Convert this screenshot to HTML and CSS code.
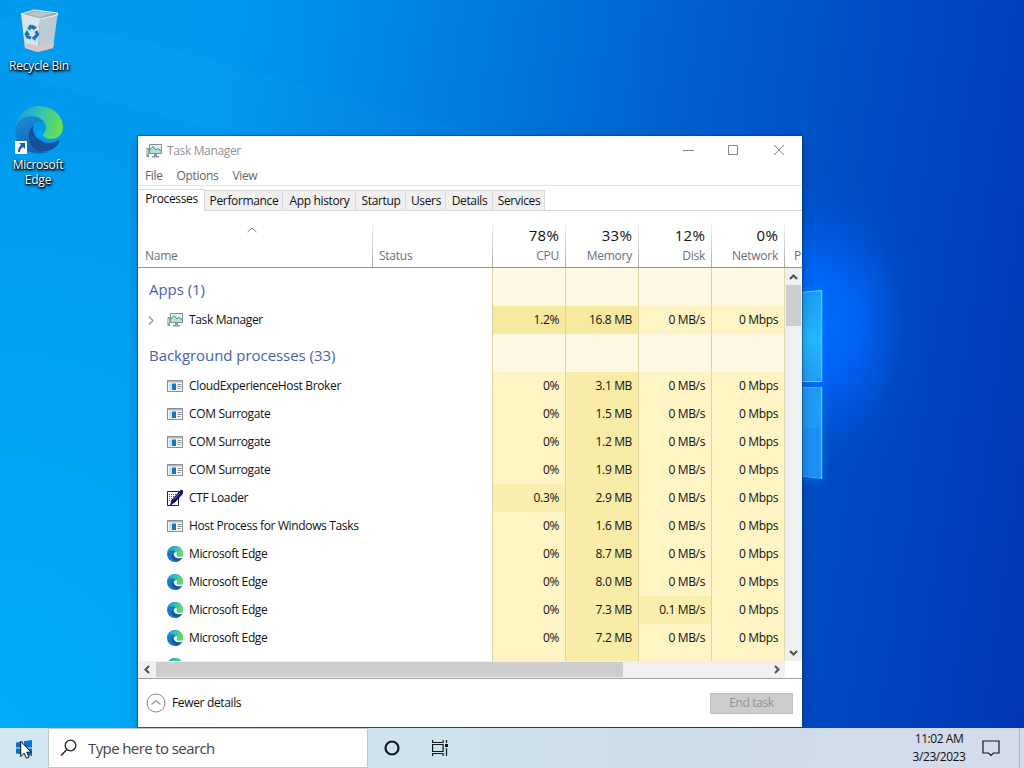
FILE: index.html
```html
<!DOCTYPE html>
<html lang="en">
<head>
    <meta charset="UTF-8">
    <meta name="viewport" content="width=device-width, initial-scale=1.0">
    <title>Task Manager</title>
    <link rel="stylesheet" href="styles.css">
</head>
<body>
    <!-- Shared icons -->
    <svg class="icon-defs" width="0" height="0">
        <defs>
            <linearGradient id="edgeTop" x1="0" y1="0.3" x2="1" y2="0.5">
                <stop offset="0" stop-color="#1b9de2"/>
                <stop offset="0.5" stop-color="#35c3b4"/>
                <stop offset="1" stop-color="#6be04a"/>
            </linearGradient>
            <linearGradient id="edgeLeft" x1="0" y1="0" x2="0.4" y2="1">
                <stop offset="0" stop-color="#1c8fd8"/>
                <stop offset="1" stop-color="#1262b4"/>
            </linearGradient>
        </defs>
        <symbol id="icon-edge" viewBox="0 0 48 48">
            <path fill="url(#edgeLeft)" d="M0.500 24C1 15 8 10 17 10C25 10 30 14 31 18C25 13 17 17 16 26C15 36 22 46 33 46C14 52 0 40 0.500 24Z"/>
            <path fill="#154f9c" d="M19 19C12 24 12 36 19 42C27 49 39 45 44 37C45 35 44 34 42 35C35 39 26 36 21 31C18 27 17 22 19 19Z"/>
            <path fill="url(#edgeTop)" d="M0.500 22C2 9 12 0 24 0C38 0 48 10 48 21C48 29 42 33 36 33C31 33 28 31 28 29C28 27 31 26 31 22C31 15 24 10 16 10C8 10 2 15 0.500 22Z"/>
        </symbol>
        <symbol id="icon-edge-small" viewBox="0 0 16 16">
            <circle cx="8" cy="8" r="8" fill="#1678c8"/>
            <path fill="#1557a6" d="M5 7C3.500 11 6 15 10 15.700C12.500 15.200 14.500 13.500 15.300 11.500L8 10Z"/>
            <path fill="url(#edgeTop)" d="M0.200 7C1 3 4 0 8 0C12.500 0 16 3.500 16 7.200C16 10 14 11.300 12 11.300L9 9C10 6.500 8 4.200 5.200 4.200C2.800 4.200 1 5.200 0.200 7Z"/>
            <path fill="#fff" d="M9.800 6.500C7.500 5.500 6 8 7.200 10C8.700 12.300 12 13 15.300 11.400L16 9.500C14 11.200 10.500 11 9.700 9.500C9.300 8.500 10.500 8 9.800 6.500Z"/>
        </symbol>
        <symbol id="icon-taskmgr" viewBox="0 0 16 16">
            <path fill="#8b9697" d="M0.500 5h2.500v9h-2.500z"/>
            <path fill="#dce6e6" d="M1.200 6.500h1v5h-1z"/>
            <path fill="#dff5f4" stroke="#829091" d="M3.500 1.500h12v9h-12z"/>
            <path fill="#b4e1e0" d="M4 6.500l3-3 3 3.500 2-2 3 3v2h-11z"/>
            <path fill="none" stroke="#3b9293" d="M4 7l2-2.500 1.500-0.500 2.500 3 1.500-1.500 3.500 2"/>
            <path fill="#8a9798" d="M8 11h3v2h2v1.500h-7v-1.500h2z"/>
        </symbol>
        <symbol id="icon-exe" viewBox="0 0 16 16">
            <path fill="#f5f7f8" stroke="#858d94" d="M0.500 2.500h15v11h-15z"/>
            <path fill="#b5bcc1" d="M1 3h14v1.500h-14z"/>
            <path fill="#cfe4f2" d="M2 5.500h3v7h-3z"/>
            <path fill="#1874bd" d="M5 5.500h4v6.500h-4z"/>
            <path stroke="#8a929a" d="M10.500 6.500h4M10.500 8.500h4M10.500 10.500h3"/>
        </symbol>
        <symbol id="icon-ctf" viewBox="0 0 16 16">
            <path fill="#fff" stroke="#222" d="M0.500 1.500h11v14h-11z"/>
            <path stroke="#555" stroke-dasharray="1 1" d="M2 4.500h8M2 6.500h7M2 8.500h5M2 10.500h3"/>
            <path fill="#10107c" stroke="#080848" stroke-width="0.800" d="M13.500 0.500h2.200v3L8.500 11.500l-5 3.500 1.500-5z"/>
            <path stroke="#5a68d8" d="M7 9.500l6-6.500"/>
        </symbol>
    </svg>

    <div class="desktop">
        <svg class="wallpaper" width="1024" height="728" viewBox="0 0 1024 728">
            <defs>
                <linearGradient id="pane" x1="0" y1="0" x2="0" y2="1">
                    <stop offset="0" stop-color="#1c9df5"/>
                    <stop offset="0.550" stop-color="#20b8ff"/>
                    <stop offset="1" stop-color="#1f9cf5"/>
                </linearGradient>
                <filter id="soft"><feGaussianBlur stdDeviation="4"/></filter>
            </defs>
            <path fill="#0c78ff" opacity="0.400" filter="url(#soft)" d="M790 288L824 286V484L790 478Z"/>
            <path fill="#fff" opacity="0.015" d="M0 70L500 210V140L140 40L0 20Z"/>
            <path fill="url(#pane)" stroke="#3fdcf8" d="M780 294.500L821.500 290.500V381.500H780Z"/>
            <path fill="#1f9bf5" stroke="#27b3f8" d="M780 387.500H821.500V478.500L780 473.500Z"/>
            <path fill="#1b8ff5" d="M780 430L821 428V478L780 473Z"/>
            <path stroke="#38cdf9" stroke-width="1.500" d="M821.500 290V382M821.500 387V479"/>
        </svg>

        <div class="shortcuts">
            <div class="shortcut bin">
                <svg width="46" height="48" viewBox="0 0 46 48">
                    <path fill="#dbe4e9" d="M5 8L24 13L22 46L9 42Z"/>
                    <path fill="#bccbd6" d="M24 13L41.500 9L37 42L22 46Z"/>
                    <path fill="#d6c8c6" d="M8.500 37L22.500 40L38 37L37 42L22 46L9 42Z"/>
                    <path fill="#9badb8" stroke="#edf3f5" d="M5 8L18 4L41.500 7V9L24 13Z"/>
                    <path fill="#b9c6ce" d="M11 8L19 5.500L36 7.500L24 11Z"/>
                    <path fill="none" stroke="#1474c6" stroke-width="3.200" d="M12.500 23.500L14.500 20.500L17.500 21.500M20 25L21.500 28.500L19 31.500M15 32L11.500 31L10.500 28"/>
                    <path fill="#1474c6" d="M16.500 18.500L21 21.500L17 24.500ZM20 28.500L15.500 32L19.500 35ZM8 28.500L11 24L14 29Z"/>
                </svg>
                <span>Recycle Bin</span>
            </div>
            <div class="shortcut edge">
                <svg width="48" height="48" viewBox="0 0 48 48">
                    <use href="#icon-edge" width="48" height="48"/>
                    <path fill="#f6f8fb" d="M0 35h12v13h-12z"/>
                    <path fill="#245a9d" d="M4 37h6v6l-2-2c-2 1-3 3-3 5h-2c0-3 1-5 3-7z"/>
                </svg>
                <span>Microsoft<br>Edge</span>
            </div>
        </div>

        <div class="window">
            <div class="title-bar">
                <svg class="title-icon" width="16" height="16"><use href="#icon-taskmgr"/></svg>
                <span class="title">Task Manager</span>
                <svg class="window-controls" width="104" height="12" viewBox="0 0 104 12">
                    <path fill="none" stroke="#888" d="M0 6.500h11M45.500 1.500h9v9h-9zM91 1l10 10M101 1L91 11"/>
                </svg>
            </div>
            <div class="menu-bar">
                <span>File</span>
                <span>Options</span>
                <span>View</span>
            </div>

            <div class="tabs">
                <div class="tab active tab-processes">Processes</div>
                <div class="tab tab-performance">Performance</div>
                <div class="tab tab-history">App history</div>
                <div class="tab tab-startup">Startup</div>
                <div class="tab tab-users">Users</div>
                <div class="tab tab-details">Details</div>
                <div class="tab tab-services">Services</div>
            </div>

            <div class="table-header">
                <div class="col name">
                    <svg class="sort-arrow" width="10" height="6" viewBox="0 0 10 6"><path fill="none" stroke="#777" d="M0.500 5L5 1l4.500 4"/></svg>
                    <span class="label">Name</span>
                </div>
                <div class="col status"><span class="label">Status</span></div>
                <div class="col"><span class="total">78%</span><span class="label">CPU</span></div>
                <div class="col"><span class="total">33%</span><span class="label">Memory</span></div>
                <div class="col"><span class="total">12%</span><span class="label">Disk</span></div>
                <div class="col"><span class="total">0%</span><span class="label">Network</span></div>
                <div class="col last"><span class="label">P</span></div>
            </div>

            <div class="table-body">
                <div class="rows">
                    <div class="row group">
                        <div class="process"><span>Apps (1)</span></div>
                        <div class="cell"></div><div class="cell"></div><div class="cell"></div><div class="cell"></div>
                    </div>
                    <div class="row">
                        <div class="process">
                            <svg class="expand" width="6" height="9" viewBox="0 0 6 9"><path fill="none" stroke="#999" stroke-width="1.300" d="M1 0.500l4 4-4 4"/></svg>
                            <svg class="icon" width="16" height="16"><use href="#icon-taskmgr"/></svg>
                            <span>Task Manager</span>
                        </div>
                        <div class="cell high">1.2%</div><div class="cell high">16.8 MB</div><div class="cell">0 MB/s</div><div class="cell">0 Mbps</div>
                    </div>
                    <div class="row group">
                        <div class="process"><span>Background processes (33)</span></div>
                        <div class="cell"></div><div class="cell"></div><div class="cell"></div><div class="cell"></div>
                    </div>
                    <div class="row">
                        <div class="process"><svg class="icon" width="16" height="16"><use href="#icon-exe"/></svg><span>CloudExperienceHost Broker</span></div>
                        <div class="cell">0%</div><div class="cell mid">3.1 MB</div><div class="cell">0 MB/s</div><div class="cell">0 Mbps</div>
                    </div>
                    <div class="row">
                        <div class="process"><svg class="icon" width="16" height="16"><use href="#icon-exe"/></svg><span>COM Surrogate</span></div>
                        <div class="cell">0%</div><div class="cell mid">1.5 MB</div><div class="cell">0 MB/s</div><div class="cell">0 Mbps</div>
                    </div>
                    <div class="row">
                        <div class="process"><svg class="icon" width="16" height="16"><use href="#icon-exe"/></svg><span>COM Surrogate</span></div>
                        <div class="cell">0%</div><div class="cell mid">1.2 MB</div><div class="cell">0 MB/s</div><div class="cell">0 Mbps</div>
                    </div>
                    <div class="row">
                        <div class="process"><svg class="icon" width="16" height="16"><use href="#icon-exe"/></svg><span>COM Surrogate</span></div>
                        <div class="cell">0%</div><div class="cell mid">1.9 MB</div><div class="cell">0 MB/s</div><div class="cell">0 Mbps</div>
                    </div>
                    <div class="row">
                        <div class="process"><svg class="icon" width="16" height="16"><use href="#icon-ctf"/></svg><span>CTF Loader</span></div>
                        <div class="cell low">0.3%</div><div class="cell mid">2.9 MB</div><div class="cell">0 MB/s</div><div class="cell">0 Mbps</div>
                    </div>
                    <div class="row">
                        <div class="process"><svg class="icon" width="16" height="16"><use href="#icon-exe"/></svg><span>Host Process for Windows Tasks</span></div>
                        <div class="cell">0%</div><div class="cell mid">1.6 MB</div><div class="cell">0 MB/s</div><div class="cell">0 Mbps</div>
                    </div>
                    <div class="row">
                        <div class="process"><svg class="icon" width="16" height="16"><use href="#icon-edge-small"/></svg><span>Microsoft Edge</span></div>
                        <div class="cell">0%</div><div class="cell mid">8.7 MB</div><div class="cell">0 MB/s</div><div class="cell">0 Mbps</div>
                    </div>
                    <div class="row">
                        <div class="process"><svg class="icon" width="16" height="16"><use href="#icon-edge-small"/></svg><span>Microsoft Edge</span></div>
                        <div class="cell">0%</div><div class="cell mid">8.0 MB</div><div class="cell">0 MB/s</div><div class="cell">0 Mbps</div>
                    </div>
                    <div class="row">
                        <div class="process"><svg class="icon" width="16" height="16"><use href="#icon-edge-small"/></svg><span>Microsoft Edge</span></div>
                        <div class="cell">0%</div><div class="cell mid">7.3 MB</div><div class="cell low">0.1 MB/s</div><div class="cell">0 Mbps</div>
                    </div>
                    <div class="row">
                        <div class="process"><svg class="icon" width="16" height="16"><use href="#icon-edge-small"/></svg><span>Microsoft Edge</span></div>
                        <div class="cell">0%</div><div class="cell mid">7.2 MB</div><div class="cell">0 MB/s</div><div class="cell">0 Mbps</div>
                    </div>
                    <!-- Cut off by the bottom of the list -->
                    <div class="row">
                        <div class="process"><svg class="icon" width="16" height="16"><use href="#icon-edge-small"/></svg></div>
                        <div class="cell"></div><div class="cell mid"></div><div class="cell"></div><div class="cell"></div>
                    </div>
                </div>
                <div class="scroll-vertical">
                    <svg width="9" height="6" viewBox="0 0 9 6"><path fill="none" stroke="#505050" stroke-width="2" d="M1 5l3.500-3.500L8 5"/></svg>
                    <div class="thumb"></div>
                    <svg class="down" width="9" height="6" viewBox="0 0 9 6"><path fill="none" stroke="#505050" stroke-width="2" d="M1 1l3.500 3.500L8 1"/></svg>
                </div>
            </div>
            <div class="scroll-horizontal">
                <svg width="6" height="9" viewBox="0 0 6 9"><path fill="none" stroke="#505050" stroke-width="2" d="M5 1L1.500 4.500 5 8"/></svg>
                <div class="thumb"></div>
                <svg class="right" width="6" height="9" viewBox="0 0 6 9"><path fill="none" stroke="#505050" stroke-width="2" d="M1 1l3.500 3.500L1 8"/></svg>
            </div>

            <div class="window-footer">
                <svg width="20" height="20" viewBox="0 0 20 20">
                    <circle cx="10" cy="10" r="9" fill="none" stroke="#8a8a8a"/>
                    <path fill="none" stroke="#999" stroke-width="1.300" d="M5.500 11.500L10 7.500l4.500 4"/>
                </svg>
                <span class="fewer">Fewer details</span>
                <button class="end-task" disabled>End task</button>
            </div>
        </div>
    </div>

    <div class="taskbar">
        <div class="start">
            <svg width="16" height="16" viewBox="0 0 16 16"><path fill="#0873ca" d="M0 2.500L7 1.500V7.500H0ZM8 1.300L16 0V7.500H8ZM0 8.500H7V14.500L0 13.500ZM8 8.500H16V16L8 14.700Z"/></svg>
            <svg class="cursor" width="12" height="19" viewBox="0 0 12 19"><path fill="#fff" stroke="#111" d="M0.700 1.200V16.500L4.200 13.200L6.500 18.200L9 17L6.700 12.200H11.200Z"/></svg>
        </div>
        <div class="search">
            <svg width="18" height="18" viewBox="0 0 18 18"><path fill="none" stroke="#222" stroke-width="1.400" d="M6.700 10.800L1 16.500"/><circle cx="10.500" cy="6.500" r="5.300" fill="none" stroke="#222" stroke-width="1.300"/></svg>
            <span>Type here to search</span>
        </div>
        <svg class="cortana" width="16" height="16" viewBox="0 0 16 16"><circle cx="8" cy="8" r="6.500" fill="none" stroke="#101820" stroke-width="2.200"/></svg>
        <svg class="task-view" width="17" height="16" viewBox="0 0 17 16"><path fill="none" stroke="#101820" stroke-width="1.200" d="M0.600 0v2.500h10.500V0M0.600 4.500h10.500v7H0.600zM0.600 16v-2.500h10.500V16M14.500 0v3M14.500 8v8"/><path fill="#101820" d="M13 4h3v3h-3z"/></svg>
        <div class="clock"><span>11:02 AM</span><span>3/23/2023</span></div>
        <svg class="action-center" width="18" height="17" viewBox="0 0 18 17"><path fill="none" stroke="#101820" stroke-width="1.200" d="M1 1h16v12h-5.500L9 15.500 6.500 13H1z"/></svg>
        <div class="show-desktop"></div>
    </div>
</body>
</html>
```

FILE: styles.css
```css
* {
    box-sizing: border-box;
}

body {
    margin: 0;
    width: 1024px;
    height: 768px;
    overflow: hidden;
    font-family: "Open Sans", "Noto Sans", sans-serif;
    font-size: 12px;
    line-height: 16px;
    letter-spacing: -0.35px;
    color: #111;
}

svg {
    display: block;
    flex: none;
}

.icon-defs {
    position: absolute;
}

.desktop {
    position: relative;
    height: 728px;
    background:
        radial-gradient(ellipse 120px 160px at 815px 325px, #006cff 0%, rgba(0, 104, 255, 0.8) 35%, rgba(0, 90, 225, 0.15) 75%, rgba(0, 90, 225, 0) 100%),
        radial-gradient(ellipse 500px 600px at 0 100%, rgba(0, 185, 255, 0.6), rgba(0, 180, 255, 0)),
        linear-gradient(98deg, #009bef 0%, #009bf0 20%, #0086e4 36%, #0068d3 56%, #004fc6 76%, #0040bd 90%, #0036b4 100%);
}

.wallpaper {
    position: absolute;
    top: 0;
    left: 0;
}

/* Desktop icons */
.shortcuts {
    position: absolute;
    top: 6px;
    left: 1px;
    width: 76px;
}

.shortcut {
    display: flex;
    flex-direction: column;
    align-items: center;
    text-align: center;
    line-height: 15px;
    letter-spacing: -0.25px;
    color: #fff;
    text-shadow: 1px 1px 2px #000, 0 1px 2px #000, 1px 2px 3px rgba(0, 0, 0, 0.6);
}

.shortcut.bin {
    height: 100px;
}

.shortcut span {
    margin-top: 4px;
}

.shortcut.edge span {
    margin: 3px 2px 0 0;
}

/* Task Manager window */
.window {
    position: absolute;
    top: 136px;
    left: 138px;
    width: 664px;
    height: 591px;
    background: #fff;
    box-shadow: 0 0 0 1px rgba(0, 65, 115, 0.5), 0 3px 10px rgba(0, 0, 0, 0.3);
}

.title-bar {
    height: 30px;
    display: flex;
    align-items: center;
    padding: 0 15px 0 8px;
    color: #929292;
}

.title {
    margin-left: 5px;
}

.window-controls {
    margin: -2px 0 0 auto;
}

.menu-bar {
    height: 20px;
    display: flex;
    gap: 14px;
    padding: 2px 7px;
    color: #666;
    border-bottom: 1px solid #e3e3e3;
}

.tabs {
    height: 25px;
    display: flex;
    align-items: flex-end;
    padding-top: 3px;
    border-bottom: 1px solid #d9d9d9;
}

.tab {
    height: 20px;
    text-align: center;
    white-space: nowrap;
    background: #f0f0f0;
    border: 1px solid #d9d9d9;
    border-width: 1px 1px 0 0;
    padding: 2px 0 0 1px;
}

.tab.active {
    height: 22px;
    margin-bottom: -1px;
    padding-top: 1px;
    background: #fff;
}

.tab-processes {
    width: 67px;
}

.tab-performance {
    width: 78px;
}

.tab-history {
    width: 73px;
}

.tab-startup {
    width: 50px;
}

.tab-users {
    width: 40px;
}

.tab-details {
    width: 47px;
}

.tab-services {
    width: 52px;
}

.table-header {
    height: 57px;
    display: grid;
    grid-template-columns: 234px 120px 73px 73px 73px 73px 18px;
    border-bottom: 1px solid #929292;
}

.col {
    display: flex;
    flex-direction: column;
    align-items: flex-end;
    justify-content: flex-end;
    margin-top: 13px;
    padding: 0 6px 3px 0;
    border-left: 1px solid;
    border-image: linear-gradient(#f4f4f4, #aaa) 1;
}

.col.name {
    align-items: flex-start;
    justify-content: space-between;
    padding-left: 7px;
    border: none;
}

.col.status {
    align-items: flex-start;
    padding-left: 6px;
}

.col.last {
    align-items: flex-start;
    padding: 0 0 3px 9px;
    overflow: hidden;
}

.sort-arrow {
    margin: 3px 0 0 102px;
}

.label {
    color: #68707c;
    letter-spacing: -0.25px;
}

.total {
    font-size: 15px;
    line-height: 20px;
    letter-spacing: 0.2px;
    margin-bottom: 3px;
}

.table-body {
    height: 393px;
    display: flex;
    overflow: hidden;
}

.rows {
    width: 647px;
    border-right: 1px solid #e3dcae;
}

.row {
    height: 28px;
    display: grid;
    grid-template-columns: 354px 73px 73px 73px 73px;
    line-height: 28px;
}

.row.group {
    height: 38px;
    line-height: 43px;
}

.process {
    display: flex;
    align-items: center;
    padding-left: 29px;
    white-space: nowrap;
}

.group .process {
    padding-left: 11px;
    font-size: 15px;
    letter-spacing: -0.05px;
    color: #4563ae;
}

.icon {
    margin-right: 6px;
}

.expand {
    margin-left: -19px;
    margin-right: 13px;
}

.cell {
    padding-right: 6px;
    text-align: right;
    background: #fff4c4;
    border-left: 1px solid #ddd59f;
}

.cell.low {
    background: #fbefb0;
}

.cell.mid {
    background: #f9eca8;
}

.cell.high {
    background: #f8e9a0;
}

.group .cell {
    background: #fff9e4;
}

/* Scrollbars */
.scroll-vertical {
    width: 17px;
    display: flex;
    flex-direction: column;
    align-items: center;
    padding: 6px 1px 5px;
    background: #f0f0f0;
}

.scroll-vertical .thumb {
    width: 15px;
    height: 41px;
    margin-top: 5px;
    background: #cdcdcd;
}

.scroll-vertical .down {
    margin-top: auto;
}

.scroll-horizontal {
    width: 647px;
    height: 17px;
    display: flex;
    align-items: center;
    padding: 0 5px 0 6px;
    background: #f0f0f0;
}

.scroll-horizontal .thumb {
    width: 467px;
    height: 15px;
    margin-left: 6px;
    background: #cdcdcd;
}

.scroll-horizontal .right {
    margin-left: auto;
}

.window-footer {
    height: 49px;
    display: flex;
    align-items: center;
    padding: 0 9px 0 8px;
    border-top: 1px solid #a0a0a0;
}

.fewer {
    margin-left: 6px;
}

.end-task {
    width: 83px;
    height: 21px;
    margin-left: auto;
    padding: 0;
    border: 1px solid #bfbfbf;
    background: #ccc;
    color: #929292;
    font: inherit;
    letter-spacing: inherit;
}

/* Taskbar */
.taskbar {
    position: relative;
    height: 40px;
    display: flex;
    align-items: center;
    background: linear-gradient(90deg, #d2e7f1, #cce2ec 45%, #cddceb 65%, #d5dbec);
}

.start {
    position: relative;
    width: 48px;
    height: 40px;
    display: flex;
    align-items: center;
    justify-content: center;
}

.cursor {
    position: absolute;
    top: 12px;
    left: 20px;
}

.search {
    width: 320px;
    height: 40px;
    display: flex;
    align-items: center;
    gap: 10px;
    padding-left: 11px;
    background: #fff;
    border: 1px solid #bdc9d0;
    font-size: 15px;
    letter-spacing: -0.6px;
    color: #444;
}

.cortana {
    margin-left: 16px;
}

.task-view {
    margin-left: 32px;
}

.clock {
    width: 60px;
    margin-left: auto;
    display: flex;
    flex-direction: column;
    align-items: center;
    line-height: 18px;
    letter-spacing: -0.45px;
}

.action-center {
    margin-left: 13px;
}

.show-desktop {
    width: 5px;
    height: 40px;
    margin-left: 19px;
    border-left: 1px solid #aeb9c7;
}
```
